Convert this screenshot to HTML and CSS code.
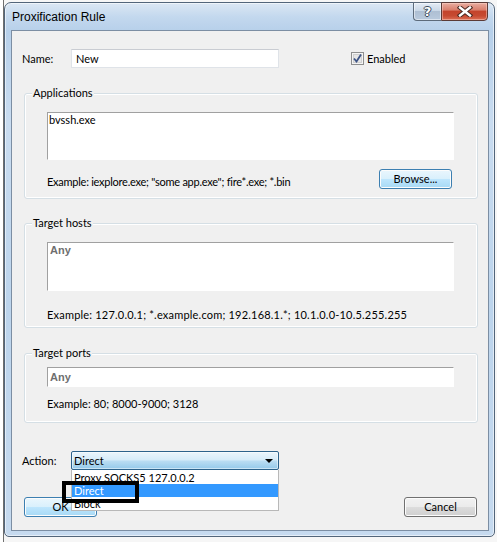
FILE: index.html
```html
<!DOCTYPE html>
<html>
<head>
<meta charset="utf-8">
<title>Proxification Rule</title>
<link rel="stylesheet" href="styles.css">
</head>
<body>
<div class="desk">
  <div class="window">
    <div class="titlebar">
      <span class="title">Proxification Rule</span>
      <div class="caption-btns">
        <div class="cbtn help"><span class="qmark">?</span></div>
        <div class="cbtn close">
          <svg width="16" height="11" viewBox="0 0 16 11">
            <path d="M3 1.5 L13 9.5 M13 1.5 L3 9.5" stroke="#4a2a22" stroke-width="4.4" stroke-linecap="square" fill="none"/>
            <path d="M3 1.5 L13 9.5 M13 1.5 L3 9.5" stroke="#ffffff" stroke-width="2.4" stroke-linecap="square" fill="none"/>
          </svg>
        </div>
      </div>
    </div>
    <div class="client">
      <div class="row name-row">
        <span class="lbl">Name:</span>
        <div class="edit name-field">New</div>
        <div class="check">
          <svg width="13" height="13" viewBox="0 0 13 13">
            <rect x="0.5" y="0.5" width="12" height="12" fill="#f4f4f4" stroke="#8e8f8f"/>
            <rect x="2.5" y="2.5" width="8" height="8" fill="#e6e6e6" stroke="#d0d0d0"/>
            <path d="M3 6.5 L5.5 9.5 L10 2.5" stroke="#3d5486" stroke-width="1.8" fill="none"/>
          </svg>
        </div>
        <span class="check-lbl">Enabled</span>
      </div>

      <div class="group g-apps">
        <div class="legend">Applications</div>
        <div class="sunken ta-apps">bvssh.exe</div>
        <div class="group-foot">
          <span class="example ex-apps">Example: iexplore.exe; "some app.exe"; fire*.exe; *.bin</span>
          <div class="btn btn-hot browse">Browse...</div>
        </div>
      </div>

      <div class="group g-hosts">
        <div class="legend">Target hosts</div>
        <div class="sunken ta-hosts"><span class="any">Any</span></div>
        <span class="example ex-hosts">Example: 127.0.0.1; *.example.com; 192.168.1.*; 10.1.0.0-10.5.255.255</span>
      </div>

      <div class="group g-ports">
        <div class="legend">Target ports</div>
        <div class="sunken in-ports"><span class="any">Any</span></div>
        <span class="example ex-ports">Example: 80; 8000-9000; 3128</span>
      </div>

      <div class="row action-row">
        <span class="lbl">Action:</span>
        <div class="combo-wrap">
          <div class="combo">
            <span>Direct</span>
            <span class="arrow"></span>
          </div>
          <div class="dropdown">
            <div class="item">Proxy SOCKS5 127.0.0.2</div>
            <div class="item sel">Direct</div>
            <div class="item">Block</div>
          </div>
          <div class="annot"></div>
        </div>
      </div>

      <div class="row buttons">
        <div class="btn btn-hot ok">OK</div>
        <div class="btn cancel">Cancel</div>
      </div>
    </div>
  </div>
</div>
</body>
</html>
```

FILE: styles.css
```css
* { box-sizing: border-box; }

html, body {
  margin: 0;
  padding: 0;
}

body {
  width: 497px;
  height: 542px;
  overflow: hidden;
  background: #f6f6f6;
  font-family: Lato, "Liberation Sans", Arial, sans-serif;
  font-size: 11px;
  color: #000;
}

.desk {
  width: 497px;
  height: 542px;
  padding: 2px 0 0 4px;
  background: linear-gradient(90deg, #ffffff 0, #ffffff 3px, #6f6f6f 3px, #6f6f6f 4px, #f6f6f6 4px);
}

.window {
  width: 491px;
  height: 535px;
  border: 1px solid #52657a;
  border-radius: 7px 7px 5px 5px;
  padding: 0 5px 5px 6px;
  display: flex;
  flex-direction: column;
  background:
    linear-gradient(180deg, #dbe7f4 0px, #c3d8ee 14px, #b7d0ea 28px, #c9dcf0 120px, #bcd4ec 300px, #c6daef 535px);
  box-shadow: inset 0 0 0 1px rgba(255,255,255,0.55);
}

.titlebar {
  height: 27px;
  display: flex;
  align-items: flex-start;
}

.title {
  margin: 7px 0 0 1px;
  line-height: 15px;
  font-family: "Liberation Sans", Arial, sans-serif;
  font-size: 12px;
  color: #000;
}

.caption-btns {
  margin: -1px 1px 0 auto;
  display: flex;
  height: 19px;
}

.cbtn {
  height: 19px;
  border: 1px solid #5d6b7b;
  display: flex;
  align-items: center;
  justify-content: center;
}

.help {
  width: 28px;
  border-right: none;
  border-radius: 0 0 0 4px;
  background: linear-gradient(180deg, #e4ecf5 0%, #cad8e7 45%, #aebfd3 50%, #b9cadd 100%);
  box-shadow: inset 0 0 0 1px rgba(255,255,255,0.5);
}

.qmark {
  font-family: "DejaVu Sans", sans-serif;
  font-weight: bold;
  font-size: 13px;
  line-height: 13px;
  color: #ffffff;
  text-shadow: 1px 0 0 #3c4a5a, -1px 0 0 #3c4a5a, 0 1px 0 #3c4a5a, 0 -1px 0 #3c4a5a;
}

.close {
  width: 47px;
  border-radius: 0 0 4px 0;
  background: linear-gradient(180deg, #e9ada0 0%, #d9806e 40%, #c4442c 50%, #c64a31 75%, #dc6f55 100%);
  box-shadow: inset 0 0 0 1px rgba(255,220,210,0.45);
  border-color: #5b3a36;
}

.close svg { display: block; }

.client {
  width: 478px;
  height: 501px;
  border: 1px solid #7c8ea3;
  background: #f0f0f0;
  padding: 18px 0 0 0;
  display: flex;
  flex-direction: column;
}

.row {
  display: flex;
  align-items: center;
}

.lbl {
  margin-left: 10px;
  width: 49px;
  line-height: 15px;
}

.name-row { height: 19px; }

.edit {
  height: 19px;
  background: #fff;
  border: 1px solid #dfe3e8;
  border-top-color: #c9ccd2;
  line-height: 17px;
  padding-left: 4px;
}

.name-field { width: 208px; }

.check {
  margin-left: 72px;
  width: 13px;
  height: 13px;
}

.check svg { display: block; }

.check-lbl {
  margin-left: 3px;
  line-height: 15px;
}

.group {
  margin-left: 12px;
  width: 454px;
  border: 1px solid #d5dfe5;
  border-radius: 3px;
  box-shadow: inset 0 0 0 1px #ffffff;
  display: flex;
  flex-direction: column;
}

.legend {
  margin: -8px 0 0 7px;
  padding: 0 1px;
  height: 14px;
  line-height: 14px;
  background: #f0f0f0;
  align-self: flex-start;
}

.sunken {
  margin-left: 22px;
  width: 407px;
  background: #fff;
  border-top: 1px solid #a0a0a0;
  border-left: 1px solid #a0a0a0;
  border-right: 1px solid #ffffff;
  border-bottom: 1px solid #ffffff;
  line-height: 14px;
  padding: 0 1px;
}

.g-apps {
  margin-top: 25px;
  height: 106px;
}

.ta-apps {
  margin-top: 12px;
  height: 48px;
}

.group-foot {
  margin: 9px 0 0 22px;
  width: 407px;
  height: 20px;
  display: flex;
  align-items: flex-end;
  justify-content: space-between;
}

.example {
  line-height: 14px;
  white-space: nowrap;
}

.ex-apps { letter-spacing: -0.25px; }

.ex-hosts { letter-spacing: 0.2px; }

.btn {
  height: 20px;
  width: 73px;
  border: 1px solid #707070;
  border-radius: 3px;
  background: linear-gradient(180deg, #f2f2f2 0%, #ebebeb 50%, #dddddd 50%, #cfcfcf 100%);
  box-shadow: inset 0 0 0 1px #fcfcfc;
  display: flex;
  align-items: center;
  justify-content: center;
  line-height: 14px;
}

.btn-hot {
  border-color: #3c7fb1;
  background: linear-gradient(180deg, #eaf6fd 0%, #d9f0fc 50%, #bee6fd 50%, #a7d9f5 100%);
}

.browse { margin-right: 2px; }

.g-hosts {
  margin-top: 24px;
  height: 105px;
}

.ta-hosts {
  margin-top: 12px;
  height: 49px;
}

.any {
  font-family: "Liberation Sans", Arial, sans-serif;
  font-weight: bold;
  font-size: 11px;
  color: #6f6f6f;
  line-height: 15px;
}

.ta-hosts .any, .in-ports .any { padding-left: 1px; }

.ex-hosts {
  margin: 17px 0 0 22px;
}

.g-ports {
  margin-top: 25px;
  height: 70px;
}

.in-ports {
  margin-top: 7px;
  height: 20px;
  line-height: 18px;
}

.ex-ports {
  margin: 10px 0 0 22px;
}

.action-row {
  margin-top: 28px;
  height: 19px;
}

.combo-wrap {
  position: relative;
  width: 208px;
  height: 19px;
}

.combo {
  height: 19px;
  border: 1px solid #2c628b;
  border-radius: 2px;
  background: linear-gradient(180deg, #eaf5fc 0%, #d6ecf9 45%, #b9dcf2 55%, #94c9ea 100%);
  box-shadow: inset 0 0 0 1px rgba(255,255,255,0.5);
  display: flex;
  align-items: center;
  padding: 0 0 0 2px;
  line-height: 15px;
}

.arrow {
  margin: 1px 5px 0 auto;
  width: 0;
  height: 0;
  border-left: 4px solid transparent;
  border-right: 4px solid transparent;
  border-top: 4px solid #000;
}

.dropdown {
  position: absolute;
  left: 0;
  top: 19px;
  width: 208px;
  height: 41px;
  background: #fff;
  border: 1px solid #b8b8b8;
  border-top: none;
  padding-top: 1px;
  z-index: 2;
}

.item {
  height: 13px;
  line-height: 13px;
  padding-left: 2px;
  white-space: nowrap;
}

.item:last-child { height: 14px; }

.item.sel {
  background: #3399ff;
  color: #fff;
}

.annot {
  position: absolute;
  left: -9px;
  top: 30px;
  width: 77px;
  height: 22px;
  border: 4px solid #000;
  z-index: 3;
}

.buttons {
  margin: 27px 0 0 12px;
  width: 453px;
  justify-content: space-between;
}
```
